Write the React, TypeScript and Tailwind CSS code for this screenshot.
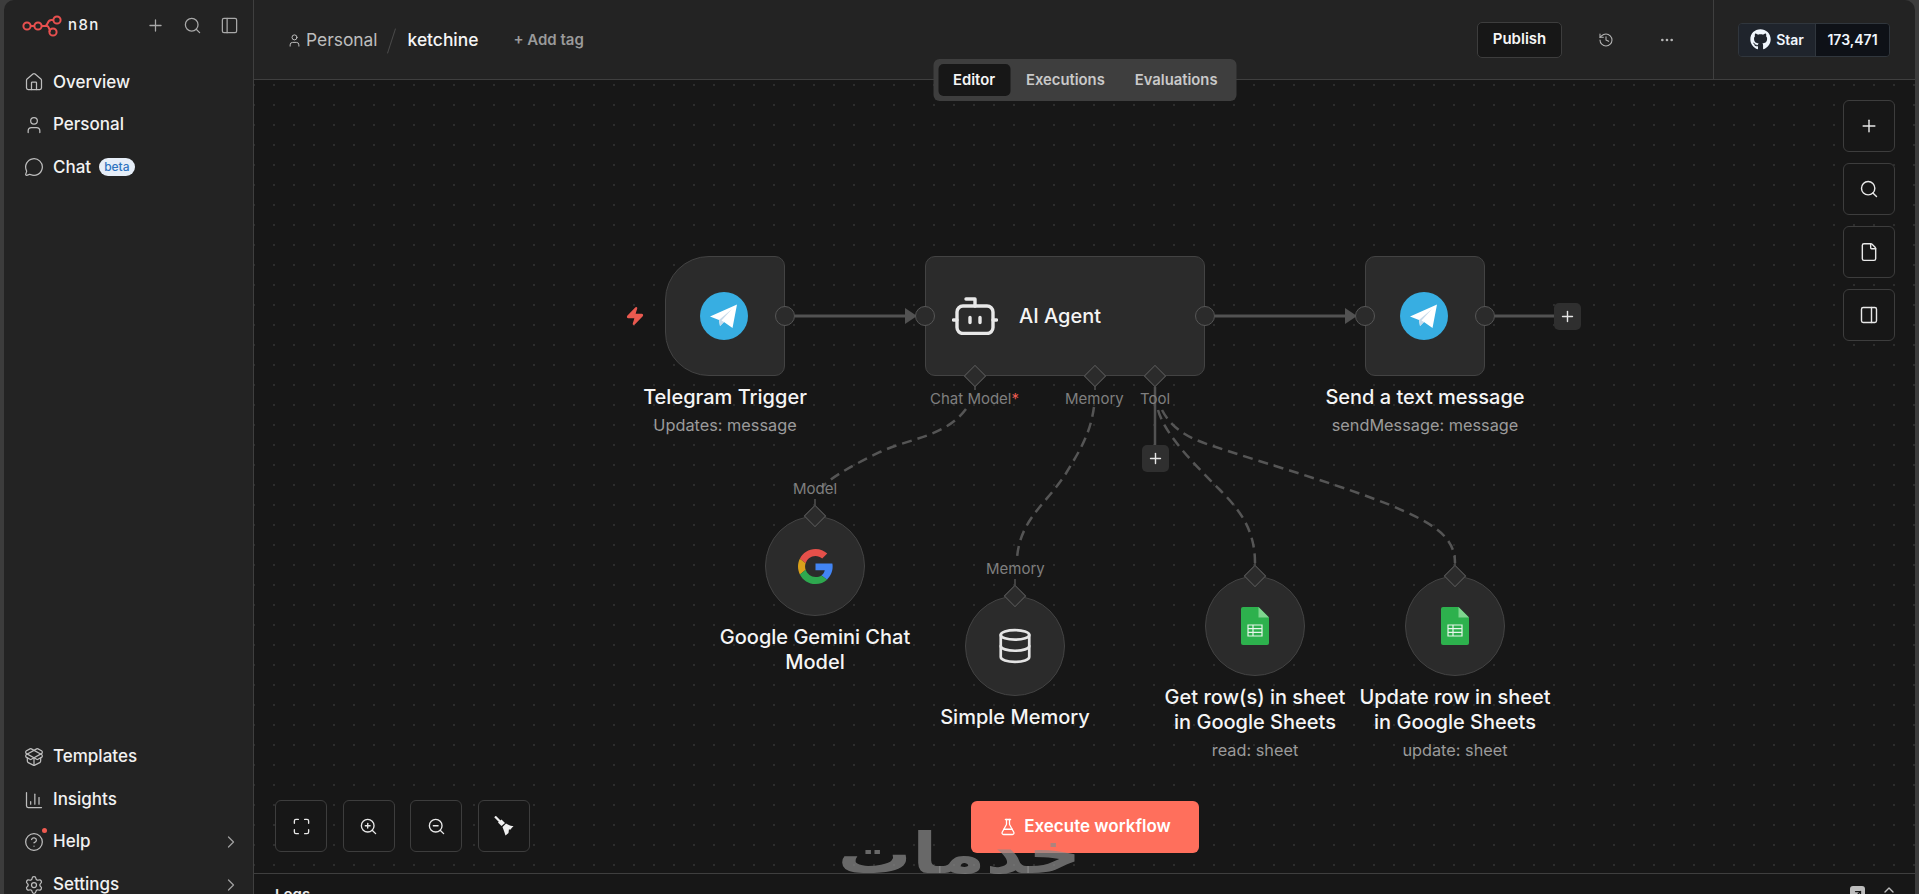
import React from 'react';
import {
  ArrowUpRight,
  ChartColumn,
  ChevronRight,
  ChevronUp,
  CircleHelp,
  Database,
  Ellipsis,
  File,
  FlaskConical,
  History,
  House,
  Maximize,
  MessageCircle,
  PackageOpen,
  PanelLeft,
  PanelRight,
  Plus,
  Search,
  Settings,
  User,
  Zap,
  ZoomIn,
  ZoomOut,
} from 'lucide-react';
import { FaGithub } from 'react-icons/fa';

const NAV_ROW = 'flex items-center h-[42.6px] pl-[20px] pr-[12px] text-[17px] font-medium text-[#f2f2f2]';
const NAV_ICON = 'text-[#bdbdbd] w-[20px] h-[20px]';
const TOOL_BTN = 'w-[52px] h-[52px] flex items-center justify-center rounded-[6px] border border-[#3d3d3d] bg-[#171717] text-[#e8e8e8]';
const TITLE = 'text-[20px] leading-[25px] font-medium text-[#f5f5f5]';
const SUB = 'text-[16.3px] leading-[20px] text-[#9b9b9b]';
const PORT = 'absolute w-[20px] h-[20px] rounded-full border border-[#565656] bg-[#2b2b2b]';
const DIAMOND = 'absolute w-[16px] h-[16px] rotate-45 border border-[#555] bg-[#2b2b2b]';
const CIRCLE_NODE = 'absolute w-[100px] h-[100px] rounded-full border border-[#434343] bg-[#2b2b2b] flex items-center justify-center';
const SQUARE_NODE = 'absolute top-[176px] h-[120px] border border-[#434343] bg-[#2b2b2b] flex items-center justify-center';
const PORT_LABEL = 'absolute text-[15px] leading-[20px] text-[#7f7f7f]';
const LABEL_BOX = 'absolute text-center';
const PLUS_BOX = 'absolute w-[27px] h-[27px] rounded-[5px] bg-[#2f2f2f] flex items-center justify-center text-[#e6e6e6]';

const N8nLogo = () => (
  <svg width="40" height="24" viewBox="22 12 40 24" fill="none" stroke="#e8504f" strokeWidth="2">
    <circle cx="27" cy="25" r="3.6" />
    <circle cx="38" cy="25" r="3.6" />
    <circle cx="57" cy="19" r="3.6" />
    <circle cx="53" cy="31" r="3.6" />
    <path d="M30.6 25h3.8M41.6 25h5.4M53.4 19h-2c-2.6 0-3.4 2-4 3.6-.5 1.400-1 2.400-2.600 2.400M47 25c1.600 0 2 2.200 2.700 4.200l-.1 1.800" />
  </svg>
);

const TelegramIcon = () => (
  <svg width="48" height="48" viewBox="0 0 48 48">
    <circle cx="24" cy="24" r="24" fill="#37aee2" />
    <path d="M10 24.500 37 12.500 32.500 36 24 30 20 34 19 28z" fill="#fff" />
    <path d="M19 28 20 34 24 30 21.500 28.400 32 17z" fill="#c8daea" />
  </svg>
);

const RobotIcon = () => (
  <svg width="46" height="38" viewBox="0 0 46 38" fill="none" stroke="#e8e8e8" strokeWidth="3.4" strokeLinecap="round" strokeLinejoin="round">
    <rect x="5" y="9" width="36" height="27.500" rx="6" />
    <path d="M23 9V2h-9" />
    <path d="M1.500 23H5M41 23h3.500" />
    <path d="M18 20.500v5M28 20.500v5" />
  </svg>
);

const BroomIcon = () => (
  <svg width="20" height="20" viewBox="0 0 20 20" fill="#f0f0f0">
    <path d="M1 .5 6.500 6" stroke="#f0f0f0" strokeWidth="2.200" />
    <path d="M4 6.500 7.500 3.500 11 7 7.500 10z" />
    <path d="M8.500 11 12 7.500C14 9 17 10 19.500 10L16 14 15 13 14.500 17 11.500 19.500C10.500 16.500 9.500 13.500 8.500 11z" />
  </svg>
);

const GoogleIcon = () => (
  <svg width="35" height="35" viewBox="0 0 48 48">
    <path fill="#e5504a" d="M24 9.500c3.500 0 6.700 1.200 9.200 3.600l6.900-6.900C35.900 2.400 30.500 0 24 0 14.600 0 6.500 5.400 2.600 13.200l8 6.200C12.400 13.700 17.700 9.500 24 9.500z" />
    <path fill="#4285f4" d="M47.500 24.500c0-1.600-.1-3.100-.4-4.500H24v9h12.700c-.6 2.900-2.200 5.400-4.700 7.100l7.700 6c4.500-4.200 7.800-10.300 7.800-17.600z" />
    <path fill="#d9a01b" d="M10.500 28.600c-.5-1.400-.8-3-.8-4.600s.3-3.200.8-4.600l-8-6.200C.9 16.500 0 20.100 0 24s.9 7.500 2.600 10.800z" />
    <path fill="#2ea84f" d="M24 48c6.500 0 11.900-2.100 15.900-5.800l-7.700-6c-2.200 1.500-4.900 2.300-8.100 2.300-6.300 0-11.600-4.200-13.500-9.900l-8 6.200C6.500 42.600 14.600 48 24 48z" />
  </svg>
);

const SheetsIcon = () => (
  <svg width="28" height="38" viewBox="0 0 28 38">
    <path d="M2 0h15.500L28 10.500V36a2 2 0 0 1-2 2H2a2 2 0 0 1-2-2V2a2 2 0 0 1 2-2z" fill="#2db14d" />
    <path d="M17.500 0 28 10.500H17.500z" fill="#7fd58f" />
    <path d="M7 18h14v11H7zM7 21.700h14M7 25.400h14M12 18v11" fill="none" stroke="#e7f6ea" strokeWidth="1.200" />
  </svg>
);

const Sidebar = () => (
  <aside className="w-[250px] shrink-0 flex flex-col h-full border-r border-[#3f3f3f] bg-[#232323]">
    <div className="flex items-center h-[50px] pl-[18px] pr-[14px]">
      <N8nLogo />
      <span className="ml-[6px] text-[15px] font-medium tracking-[1.4px] text-[#f2f2f2]">n8n</span>
      <div className="ml-auto flex items-center gap-[18px] text-[#a8a8a8]">
        <Plus size={19} strokeWidth={1.6} />
        <Search size={19} strokeWidth={1.6} />
        <PanelLeft size={19} strokeWidth={1.6} />
      </div>
    </div>
    <nav className="mt-[11px] flex flex-col">
      <div className={NAV_ROW}>
        <House strokeWidth={1.5} className={NAV_ICON} />
        <span className="ml-[9px]">Overview</span>
      </div>
      <div className={NAV_ROW}>
        <User strokeWidth={1.5} className={NAV_ICON} />
        <span className="ml-[9px]">Personal</span>
      </div>
      <div className={NAV_ROW}>
        <MessageCircle strokeWidth={1.5} className={NAV_ICON} />
        <span className="ml-[9px]">Chat</span>
        <span className="ml-[8px] h-[18px] px-[5px] rounded-full bg-[#e6eef8] text-[12px] leading-[18px] font-medium text-[#2f74c0]">beta</span>
      </div>
    </nav>
    <nav className="mt-auto mb-[-12px] flex flex-col">
      <div className={NAV_ROW}>
        <PackageOpen strokeWidth={1.5} className={NAV_ICON} />
        <span className="ml-[9px]">Templates</span>
      </div>
      <div className={NAV_ROW}>
        <ChartColumn strokeWidth={1.5} className={NAV_ICON} />
        <span className="ml-[9px]">Insights</span>
      </div>
      <div className={NAV_ROW}>
        <div className="relative">
          <CircleHelp strokeWidth={1.5} className={NAV_ICON} />
          <span className="absolute -top-[4px] right-[-3px] w-[5px] h-[5px] rounded-full bg-[#f05a50]" />
        </div>
        <span className="ml-[9px]">Help</span>
        <ChevronRight size={20} strokeWidth={1.5} className="ml-auto text-[#a0a0a0]" />
      </div>
      <div className={NAV_ROW}>
        <Settings strokeWidth={1.5} className={NAV_ICON} />
        <span className="ml-[9px]">Settings</span>
        <ChevronRight size={20} strokeWidth={1.5} className="ml-auto text-[#a0a0a0]" />
      </div>
    </nav>
  </aside>
);

const Header = () => (
  <header className="relative h-[80px] shrink-0 flex items-center border-b border-[#3f3f3f] bg-[#232323]">
    <div className="flex items-center h-full pl-[33px] pt-[2px] text-[17.4px]">
      <User size={15} strokeWidth={1.6} className="text-[#bdbdbd]" />
      <span className="ml-[4px] text-[#bdbdbd]">Personal</span>
      <span className="ml-[13px] w-[1px] h-[26px] rotate-[18deg] bg-[#4a4a4a]" />
      <span className="ml-[16px] font-medium text-[#f5f5f5]">ketchine</span>
      <span className="ml-[35px] text-[15px] font-semibold text-[#9a9a9a]">+ Add tag</span>
    </div>
    <div className="ml-auto flex items-center h-full">
      <button className="w-[85px] h-[36px] rounded-[5px] border border-[#3d3d3d] bg-[#171717] text-[15px] font-semibold text-[#f5f5f5]">Publish</button>
      <History size={16} strokeWidth={1.6} className="ml-[36px] text-[#b5b5b5]" />
      <Ellipsis size={16} strokeWidth={2} className="ml-[45px] text-[#b5b5b5]" />
      <div className="ml-[38px] h-full w-[1px] bg-[#3f3f3f]" />
      <div className="ml-[24px] mr-[25px] flex h-[34px] w-[152px] rounded-[4px] border border-[#30363d] overflow-hidden text-[14px] font-semibold text-[#f0f6fc]">
        <div className="w-[77px] flex items-center justify-center gap-[5px] border-r border-[#30363d] bg-[#1f242c]">
          <FaGithub size={21} />
          <span>Star</span>
        </div>
        <div className="flex-1 flex items-center justify-center bg-[#0e1117]">173,471</div>
      </div>
    </div>
    <div className="absolute left-1/2 -translate-x-1/2 top-[59px] z-10 flex items-center h-[42px] w-[303px] pl-[5px] rounded-[6px] bg-[#3e3e3e] text-[14.8px] font-semibold text-[#c9c9c9]">
      <div className="w-[72px] h-[32px] flex items-center justify-center rounded-[5px] bg-[#171717] text-[#f5f5f5]">Editor</div>
      <span className="ml-[16px]">Executions</span>
      <span className="ml-[30px]">Evaluations</span>
    </div>
  </header>
);

const Edges = () => (
  <svg className="absolute inset-0 w-full h-full" viewBox="254 80 1661 793" fill="none">
    <g stroke="#525252" strokeWidth="3">
      <path d="M795 316h112" />
      <path d="M1215 316h132" />
      <path d="M1495 316h60" />
      <path d="M1155 387v58" strokeWidth="2.500" />
    </g>
    <path d="M905 308l12 8-12 8z" fill="#525252" />
    <path d="M1345 308l12 8-12 8z" fill="#525252" />
    <g stroke="#525252" strokeWidth="1.500">
      <path d="M975 386v4M1095 386v4M1155 386v4M815 499v6M1015 579v6M1255 555v10M1455 555v10" />
    </g>
    <g stroke="#555555" strokeWidth="2.500" strokeDasharray="10 6">
      <path d="M966 409C945 437 910 438 880 452 855 464 833 476 822 487" />
      <path d="M1094 407C1090 435 1080 450 1065 475 1045 505 1020 520 1017 558" />
      <path d="M1158 410C1165 435 1195 465 1220 490 1240 510 1255 530 1255 563" />
      <path d="M1162 410C1175 435 1200 442 1225 450 1280 468 1340 485 1390 505 1430 522 1455 535 1455 563" />
    </g>
  </svg>
);

const Canvas = () => (
  <div className="relative flex-1 overflow-hidden bg-[#171717] bg-[radial-gradient(#2d2d2d_0.75px,transparent_0.75px)] bg-[size:20px_20px] bg-[position:-10px_-5px]">
    <Edges />

    <Zap size={20} strokeWidth={1.5} className="absolute left-[371px] top-[226px] text-[#ea5a50] fill-[#ea5a50]" />

    <div className={`${SQUARE_NODE} left-[411px] w-[120px] pr-[2px] rounded-l-[44px] rounded-r-[10px]`}>
      <TelegramIcon />
    </div>
    <div className={`${SQUARE_NODE} left-[671px] w-[280px] rounded-[10px] justify-start pl-[26px] gap-[21px]`}>
      <RobotIcon />
      <span className="text-[20px] font-medium text-[#f5f5f5]">AI Agent</span>
    </div>
    <div className={`${SQUARE_NODE} left-[1111px] w-[120px] pr-[2px] rounded-[10px]`}>
      <TelegramIcon />
    </div>

    <div className={`${PORT} left-[521px] top-[226px]`} />
    <div className={`${PORT} left-[661px] top-[226px]`} />
    <div className={`${PORT} left-[941px] top-[226px]`} />
    <div className={`${PORT} left-[1101px] top-[226px]`} />
    <div className={`${PORT} left-[1221px] top-[226px]`} />
    <div className={`${PLUS_BOX} left-[1300px] top-[223px]`}><Plus size={17} strokeWidth={2} /></div>
    <div className={`${PLUS_BOX} left-[888px] top-[365px]`}><Plus size={17} strokeWidth={2} /></div>

    <div className={`${CIRCLE_NODE} left-[511px] top-[436px]`}><GoogleIcon /></div>
    <div className={`${CIRCLE_NODE} left-[711px] top-[516px]`}>
      <Database size={38} strokeWidth={1.7} className="text-[#e4e4e4]" />
    </div>
    <div className={`${CIRCLE_NODE} left-[951px] top-[496px]`}><SheetsIcon /></div>
    <div className={`${CIRCLE_NODE} left-[1151px] top-[496px]`}><SheetsIcon /></div>

    <div className={`${DIAMOND} left-[713px] top-[288px]`} />
    <div className={`${DIAMOND} left-[833px] top-[288px]`} />
    <div className={`${DIAMOND} left-[893px] top-[288px]`} />
    <div className={`${DIAMOND} left-[553px] top-[428px]`} />
    <div className={`${DIAMOND} left-[753px] top-[508px]`} />
    <div className={`${DIAMOND} left-[993px] top-[488px]`} />
    <div className={`${DIAMOND} left-[1193px] top-[488px]`} />

    <span className={`${PORT_LABEL} left-[676px] top-[309px]`}>Chat Model<span className="text-[#ea5a50]">*</span></span>
    <span className={`${PORT_LABEL} left-[811px] top-[309px]`}>Memory</span>
    <span className={`${PORT_LABEL} left-[886px] top-[309px]`}>Tool</span>
    <span className={`${PORT_LABEL} left-[539px] top-[399px]`}>Model</span>
    <span className={`${PORT_LABEL} left-[732px] top-[479px]`}>Memory</span>

    <div className={`${LABEL_BOX} left-[371px] top-[305px] w-[200px]`}>
      <div className={TITLE}>Telegram Trigger</div>
      <div className={`${SUB} mt-[5px]`}>Updates: message</div>
    </div>
    <div className={`${LABEL_BOX} left-[1051px] top-[305px] w-[240px]`}>
      <div className={TITLE}>Send a text message</div>
      <div className={`${SUB} mt-[5px]`}>sendMessage: message</div>
    </div>
    <div className={`${LABEL_BOX} left-[461px] top-[545px] w-[200px]`}>
      <div className={TITLE}>Google Gemini Chat<br />Model</div>
    </div>
    <div className={`${LABEL_BOX} left-[661px] top-[625px] w-[200px]`}>
      <div className={TITLE}>Simple Memory</div>
    </div>
    <div className={`${LABEL_BOX} left-[901px] top-[605px] w-[200px]`}>
      <div className={TITLE}>Get row(s) in sheet<br />in Google Sheets</div>
      <div className={`${SUB} mt-[5px]`}>read: sheet</div>
    </div>
    <div className={`${LABEL_BOX} left-[1101px] top-[605px] w-[200px]`}>
      <div className={TITLE}>Update row in sheet<br />in Google Sheets</div>
      <div className={`${SUB} mt-[5px]`}>update: sheet</div>
    </div>

    <div className="absolute right-[20px] top-[20px] flex flex-col gap-[11px]">
      <div className={TOOL_BTN}><Plus size={20} strokeWidth={1.7} /></div>
      <div className={TOOL_BTN}><Search size={20} strokeWidth={1.7} /></div>
      <div className={TOOL_BTN}><File size={20} strokeWidth={1.7} /></div>
      <div className={TOOL_BTN}><PanelRight size={20} strokeWidth={1.7} /></div>
    </div>

    <div className="absolute left-[21px] top-[720px] flex gap-[15.5px]">
      <div className={TOOL_BTN}><Maximize size={19} strokeWidth={1.7} /></div>
      <div className={TOOL_BTN}><ZoomIn size={19} strokeWidth={1.7} /></div>
      <div className={TOOL_BTN}><ZoomOut size={19} strokeWidth={1.7} /></div>
      <div className={TOOL_BTN}><BroomIcon /></div>
    </div>

    <button className="absolute left-[717px] top-[721px] w-[228px] h-[52px] flex items-center justify-center gap-[7px] rounded-[6px] bg-[#ff6f5c] text-[17px] font-semibold text-white">
      <FlaskConical size={18} strokeWidth={1.7} />
      Execute workflow
    </button>
  </div>
);

const LogsBar = () => (
  <div className="h-[21px] shrink-0 flex items-start justify-between border-t border-[#3f3f3f] bg-[#171717] pl-[21px] pr-[18px] pt-[12px] overflow-hidden">
    <span className="text-[15px] leading-[18px] font-semibold text-[#e8e8e8]">Logs</span>
    <div className="flex items-start gap-[16px]">
      <div className="w-[15px] h-[15px] flex items-center justify-center rounded-[3px] bg-[#bdbdbd] text-[#171717]">
        <ArrowUpRight size={12} strokeWidth={2.5} />
      </div>
      <ChevronUp size={16} strokeWidth={2} className="mt-[-4px] text-[#bdbdbd]" />
    </div>
  </div>
);

export default function App() {
  return (
    <div className="relative w-[1919px] h-[894px] overflow-hidden bg-[#3c3c3c] px-[4px] font-['Inter',sans-serif]">
      <div className="flex h-full w-full overflow-hidden rounded-t-[10px]">
        <Sidebar />
        <main className="flex-1 min-w-0 flex flex-col">
          <Header />
          <Canvas />
          <LogsBar />
        </main>
      </div>
      <span className="absolute left-[844px] top-[814px] w-[231px] text-center text-[56px] leading-[80px] font-bold scale-x-[1.32] text-[#8c8c8c]/70 font-['DejaVu_Sans',sans-serif] pointer-events-none" dir="rtl">
        خدمات
      </span>
    </div>
  );
}
